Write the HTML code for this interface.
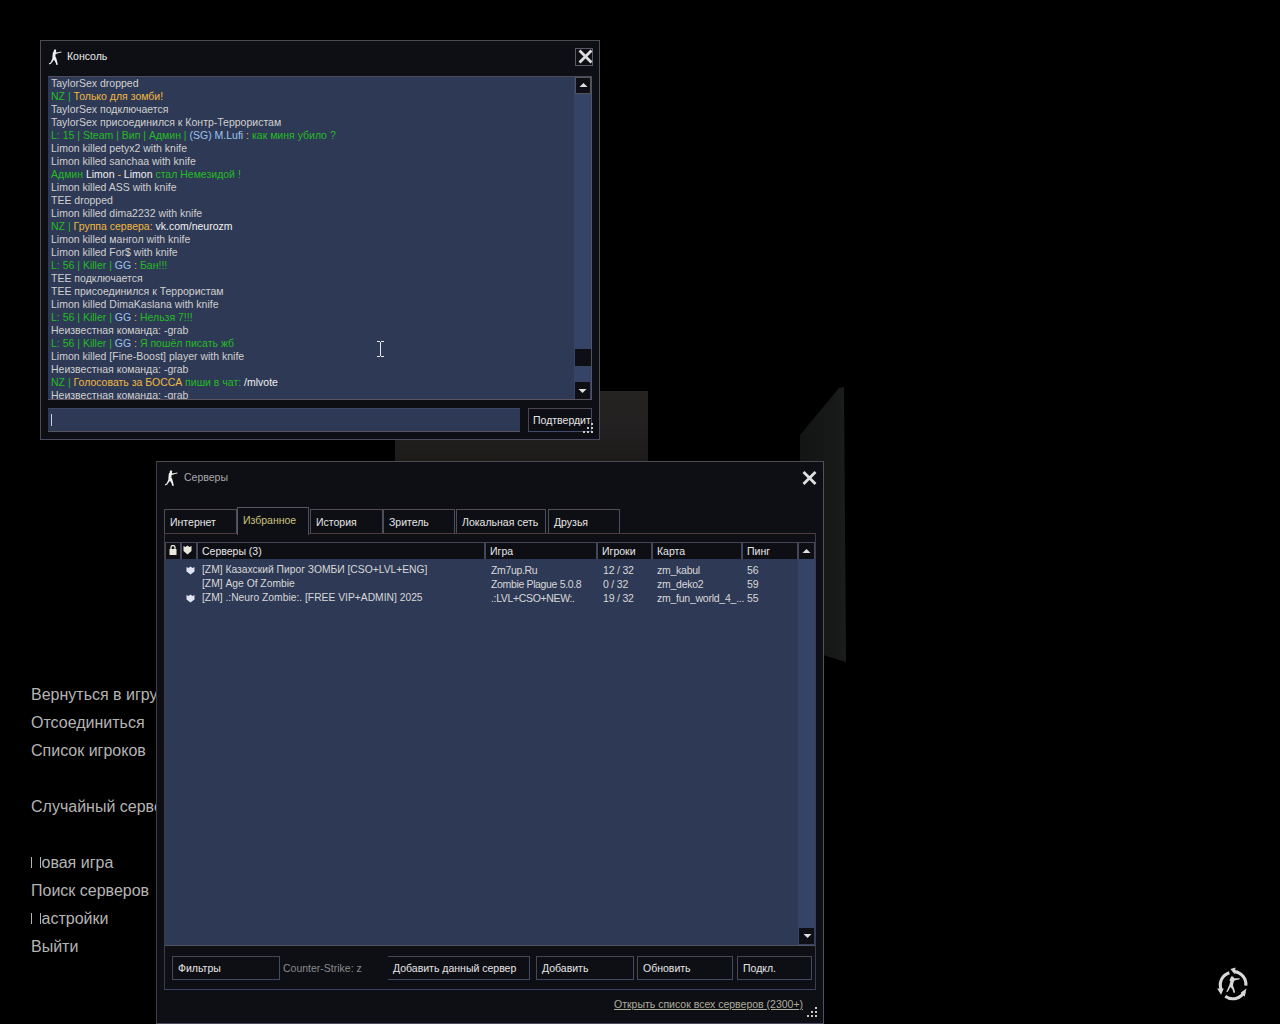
<!DOCTYPE html>
<html><head><meta charset="utf-8">
<style>
html,body{margin:0;padding:0;}
body{width:1280px;height:1024px;background:#000;position:relative;overflow:hidden;font-family:"Liberation Sans",sans-serif;}
.a{position:absolute;box-sizing:border-box;}
.t{position:absolute;white-space:pre;font-size:10.5px;line-height:13px;}
.menu{position:absolute;left:31px;font-size:16px;line-height:20px;color:#b4b4b4;white-space:pre;}
.win{position:absolute;box-sizing:border-box;background:#0e0f15;border:1px solid #4d4b4f;border-right-color:#4a4d62;border-bottom-color:#4a4d62;}
.panel{position:absolute;box-sizing:border-box;background:#2e3955;}
.btn{position:absolute;box-sizing:border-box;background:#0e0f15;border:1px solid #4d4650;border-right-color:#414a66;border-bottom-color:#414a66;color:#e6e6e6;font-size:10.5px;line-height:22px;padding-left:5px;white-space:pre;}
.g{color:#24bb24}.o{color:#f0b840}.b{color:#9ec3f0}.w{color:#f2f2f2}
#con .t{color:#d0d0d0}
.hc{position:absolute;top:543px;height:16px;background:#0e0f15;color:#e6e6e6;font-size:10.5px;line-height:16px;padding-left:4px;box-sizing:border-box;white-space:pre;}
.row{position:absolute;font-size:10.5px;line-height:14px;color:#d8d8d8;white-space:pre;}
.tab{position:absolute;box-sizing:border-box;top:509px;height:25px;background:#0e0f15;border:1px solid #554c52;border-right-color:#4a4e66;border-bottom:none;color:#e6e6e6;font-size:10.5px;line-height:24px;padding-left:5px;white-space:pre;}
.dots i{position:absolute;width:2px;height:2px;background:#c8c8c8;}
</style></head>
<body>
<!-- background scene -->
<div class="a" style="left:395px;top:391px;width:253px;height:72px;background:linear-gradient(180deg,#262422,#222020 50%,#1d1b1a);"></div>
<svg class="a" style="left:790px;top:380px" width="70" height="290">
  <defs><linearGradient id="pg" x1="0" y1="0" x2="1" y2="0"><stop offset="0" stop-color="#131414"/><stop offset="0.7" stop-color="#171818"/><stop offset="1" stop-color="#1b1c1c"/></linearGradient></defs>
  <polygon points="10,55 49,8 54,7 56,282 33,275 10,270" fill="url(#pg)"/>
</svg>

<!-- menu -->
<div class="menu" style="top:685px">Вернуться в игру</div>
<div class="menu" style="top:713px">Отсоединиться</div>
<div class="menu" style="top:741px">Список игроков</div>
<div class="menu" style="top:797px">Случайный сервер</div>
<div class="menu" style="top:853px"><span style="display:inline-block;width:9.5px;height:11.5px;border-left:1.4px solid #b4b4b4;border-right:1.4px solid #b4b4b4;box-sizing:border-box;margin-right:1px;"></span>овая игра</div>
<div class="menu" style="top:881px">Поиск серверов</div>
<div class="menu" style="top:909px"><span style="display:inline-block;width:9.5px;height:11.5px;border-left:1.4px solid #b4b4b4;border-right:1.4px solid #b4b4b4;box-sizing:border-box;margin-right:1px;"></span>астройки</div>
<div class="menu" style="top:937px">Выйти</div>

<!-- console window -->
<div id="con" class="win" style="left:40px;top:40px;width:560px;height:400px;">
</div>
<div id="conc">
  <svg class="a" style="left:48px;top:49px" width="14" height="17" viewBox="0 0 14 17"><ellipse cx="7" cy="1.7" rx="1.2" ry="1.5" fill="#f0f0f0"/><path d="M5.6 2.6 L7.5 2.4 L8.6 3.4 L13.4 2.5 L13.4 3.4 L10.6 4 L9.8 4.6 L7.6 4.9 L7.4 7.6 L8.3 9.2 L9.4 13.5 L9.8 15.8 L8.4 16 L7.6 13.6 L6 10.8 L3.2 14.6 L1.4 15.4 L0.9 14.3 L2.6 13.4 L4.3 9.8 L4.6 5.4 L4.9 3.5 Z" fill="#f0f0f0"/></svg>
  <div class="t" style="left:67px;top:50px;color:#ececec;font-size:10.5px;">Консоль</div>
  <div class="a" style="left:575px;top:48px;width:18px;height:18px;border:1px solid #5c5866;background:#0e0f15;">
    <svg class="a" style="left:0px;top:0px" width="17" height="17"><path d="M4.5 2.6 L14.5 12.6 M14.5 2.6 L4.5 12.6" stroke="#dcdcdc" stroke-width="2.8" stroke-linecap="square"/></svg>
  </div>
  <!-- text panel -->
  <div class="panel" style="left:48px;top:76px;width:544px;height:324px;border-top:1px solid #4c4b5a;border-bottom:1px solid #5a5560;overflow:hidden;">
  </div>
  <div class="a" style="left:574px;top:77px;width:18px;height:322px;background:#354466;border-right:1px solid #55525e;"></div>
  <div class="a" style="left:575px;top:77px;width:16px;height:17px;background:#0e0f15;border:1px solid #55525e;">
    <svg class="a" style="left:3px;top:4px" width="9" height="6"><path d="M0.5 5 L4.5 1 L8.5 5 Z" fill="#e0e0e0"/></svg>
  </div>
  <div class="a" style="left:575px;top:349px;width:16px;height:17px;background:#0e0f15;"></div>
  <div class="a" style="left:575px;top:382px;width:15px;height:17px;background:#0e0f15;">
    <svg class="a" style="left:3px;top:6px" width="9" height="6"><path d="M0.5 1 L4.5 5 L8.5 1 Z" fill="#e0e0e0"/></svg>
  </div>
  <div style="position:absolute;left:51px;top:77px;width:520px;height:322px;overflow:hidden;">
   <div class="t" style="left:0;top:0;color:#d0d0d0;">TaylorSex dropped
<span class="g">NZ | </span><span class="o">Только для зомби!</span>
TaylorSex подключается
TaylorSex присоединился к Контр-Террористам
<span class="g">L: 15 | Steam | Вип | Админ | </span><span class="b">(SG) M.Lufi</span><span class="o"> : </span><span class="g">как миня убило ?</span>
Limon killed petyx2 with knife
Limon killed sanchaa with knife
<span class="g">Админ </span><span class="w">Limon </span><span class="o">-</span><span class="w"> Limon </span><span class="g">стал Немезидой !</span>
Limon killed ASS with knife
TEE dropped
Limon killed dima2232 with knife
<span class="g">NZ | </span><span class="o">Группа сервера: </span><span class="w">vk.com/neurozm</span>
Limon killed мангол with knife
Limon killed For$ with knife
<span class="g">L: 56 | Killer | </span><span class="b">GG</span><span class="o"> : </span><span class="g">Бан!!!</span>
TEE подключается
TEE присоединился к Террористам
Limon killed DimaKaslana with knife
<span class="g">L: 56 | Killer | </span><span class="b">GG</span><span class="o"> : </span><span class="g">Нельзя 7!!!</span>
Неизвестная команда: -grab
<span class="g">L: 56 | Killer | </span><span class="b">GG</span><span class="o"> : </span><span class="g">Я пошёл писать жб</span>
Limon killed [Fine-Boost] player with knife
Неизвестная команда: -grab
<span class="g">NZ | </span><span class="o">Голосовать за БОССА </span><span class="g">пиши в чат: </span><span class="w">/mlvote</span>
Неизвестная команда: -grab</div>
  </div>
  <!-- I-beam cursor -->
  <svg class="a" style="left:376px;top:341px" width="9" height="16"><path d="M1 0.5 H4 M5 0.5 H8 M4.5 1 V15 M1 15.5 H4 M5 15.5 H8" stroke="#e8e8e8" stroke-width="1"/></svg>
  <!-- input -->
  <div class="panel" style="left:48px;top:408px;width:472px;height:24px;border-top:1px solid #3a4666;border-bottom:1px solid #58555f;"></div>
  <div class="a" style="left:51px;top:414px;width:1px;height:12px;background:#c8d0e0;"></div>
  <div class="btn" style="left:528px;top:408px;width:64px;height:24px;overflow:hidden;padding-left:4px;">Подтвердит</div>
  <div class="dots"><i style="left:591px;top:423px"></i><i style="left:587px;top:427px"></i><i style="left:591px;top:427px"></i><i style="left:583px;top:431px"></i><i style="left:587px;top:431px"></i><i style="left:591px;top:431px"></i></div>
</div>

<!-- servers window -->
<div class="win" style="left:156px;top:461px;width:668px;height:563px;border-color:#4d4b4f #4e5266 #4a4d62 #3e3c42;"></div>
<div id="srv">
  <svg class="a" style="left:164px;top:470px" width="14" height="17" viewBox="0 0 14 17"><ellipse cx="7" cy="1.7" rx="1.2" ry="1.5" fill="#f0f0f0"/><path d="M5.6 2.6 L7.5 2.4 L8.6 3.4 L13.4 2.5 L13.4 3.4 L10.6 4 L9.8 4.6 L7.6 4.9 L7.4 7.6 L8.3 9.2 L9.4 13.5 L9.8 15.8 L8.4 16 L7.6 13.6 L6 10.8 L3.2 14.6 L1.4 15.4 L0.9 14.3 L2.6 13.4 L4.3 9.8 L4.6 5.4 L4.9 3.5 Z" fill="#f0f0f0"/></svg>
  <div class="t" style="left:184px;top:471px;color:#a8a8a8;font-size:10.5px;">Серверы</div>
  <svg class="a" style="left:802px;top:471px" width="15" height="14"><path d="M2.5 2 L12.5 12 M12.5 2 L2.5 12" stroke="#e0e0e0" stroke-width="2.8" stroke-linecap="square"/></svg>

  <!-- tabs -->
  <div class="tab" style="left:164px;width:73px;">Интернет</div>
  <div class="tab" style="left:237px;top:507px;width:72px;height:28px;color:#cac27c;line-height:24px;border-color:#5a5660 #4a5068 #4a5068 #5a5660;">Избранное</div>
  <div class="tab" style="left:310px;width:73px;">История</div>
  <div class="tab" style="left:383px;width:72px;">Зритель</div>
  <div class="tab" style="left:456px;width:90px;">Локальная сеть</div>
  <div class="tab" style="left:548px;width:72px;">Друзья</div>

  <!-- main tab panel -->
  <div class="a" style="left:164px;top:533px;width:652px;height:457px;border:1px solid #3c3c4c;border-top-color:#4e3c3a;border-bottom-color:#3a4266;"></div>
  <div class="a" style="left:237px;top:533px;width:72px;height:2px;background:#0e0f15;border-left:1px solid #5a5660;border-right:1px solid #4a5068;"></div>

  <!-- list panel -->
  <div class="panel" style="left:165px;top:542px;width:650px;height:404px;border-top:1px solid #4a4a5c;border-bottom:1px solid #55525a;"></div>
  <div class="a" style="left:165px;top:542px;width:650px;height:17px;background:#45465a;"></div>
  <div class="a" style="left:165px;top:542px;width:1px;height:17px;background:#5a4545;"></div>
  <div class="hc" style="left:166px;width:14px;"></div>
  <div class="hc" style="left:182px;width:14px;"></div>
  <div class="hc" style="left:198px;width:286px;">Серверы (3)</div>
  <div class="hc" style="left:486px;width:110px;">Игра</div>
  <div class="hc" style="left:598px;width:53px;">Игроки</div>
  <div class="hc" style="left:653px;width:88px;">Карта</div>
  <div class="hc" style="left:743px;width:54px;">Пинг</div>
  <div class="hc" style="left:799px;width:15px;"><svg class="a" style="left:3px;top:5px" width="9" height="6"><path d="M0.5 5 L4.5 1 L8.5 5 Z" fill="#e0e0e0"/></svg></div>
  <!-- lock icon -->
  <svg class="a" style="left:169px;top:545px" width="8" height="10"><path d="M2 4 V2.5 A2 2 0 0 1 6 2.5 V4" stroke="#e8e8dc" stroke-width="1.3" fill="none"/><rect x="0.5" y="4" width="7" height="6" fill="#e8e8dc"/></svg>
  <svg class="a" style="left:183px;top:545px" width="9" height="10"><path d="M0.5 1 L2.5 2 L4.5 0.5 L6.5 2 L8.5 1 V6 L4.5 9.5 L0.5 6 Z" fill="#e8e8dc"/></svg>
  <!-- scrollbar -->
  <div class="a" style="left:798px;top:559px;width:17px;height:386px;background:#354466;"></div>
  <div class="a" style="left:799px;top:928px;width:15px;height:16px;background:#0e0f15;"><svg class="a" style="left:4px;top:5px" width="9" height="6"><path d="M0.5 1 L4.5 5 L8.5 1 Z" fill="#e0e0e0"/></svg></div>

  <!-- rows -->
  <svg class="a" style="left:186px;top:566px" width="9" height="9"><path d="M0.5 1 L2.5 2 L4.5 0.5 L6.5 2 L8.5 1 V5.5 L4.5 8.5 L0.5 5.5 Z" fill="#e0e4ee"/></svg>
  <svg class="a" style="left:186px;top:594px" width="9" height="9"><path d="M0.5 1 L2.5 2 L4.5 0.5 L6.5 2 L8.5 1 V5.5 L4.5 8.5 L0.5 5.5 Z" fill="#e0e4ee"/></svg>
  <div class="row" style="left:202px;top:563px;font-size:10.3px;">[ZM] Казахский Пирог ЗОМБИ [CSO+LVL+ENG]
[ZM] Age Of Zombie
[ZM] .:Neuro Zombie:. [FREE VIP+ADMIN] 2025</div>
  <div class="row" style="left:491px;top:563px;letter-spacing:-0.35px;">Zm7up.Ru
Zombie Plague 5.0.8
.:LVL+CSO+NEW:.</div>
  <div class="row" style="left:603px;top:563px;letter-spacing:-0.2px;">12 / 32
0 / 32
19 / 32</div>
  <div class="row" style="left:657px;top:563px;letter-spacing:-0.25px;">zm_kabul
zm_deko2
zm_fun_world_4_...</div>
  <div class="row" style="left:747px;top:563px;">56
59
55</div>

  <!-- bottom buttons -->
  <div class="btn" style="left:172px;top:956px;width:108px;height:24px;">Фильтры</div>
  <div class="t" style="left:283px;top:962px;color:#8a8a8a;">Counter-Strike: z</div>
  <div class="btn" style="left:388px;top:956px;width:142px;height:24px;border-left:none;">Добавить данный сервер</div>
  <div class="btn" style="left:536px;top:956px;width:98px;height:24px;">Добавить</div>
  <div class="btn" style="left:637px;top:956px;width:96px;height:24px;">Обновить</div>
  <div class="btn" style="left:737px;top:956px;width:75px;height:24px;">Подкл.</div>
  <div class="t" style="left:614px;top:998px;color:#aeac9c;text-decoration:underline;">Открыть список всех серверов (2300+)</div>
  <div class="dots"><i style="left:815px;top:1007px"></i><i style="left:811px;top:1011px"></i><i style="left:815px;top:1011px"></i><i style="left:807px;top:1015px"></i><i style="left:811px;top:1015px"></i><i style="left:815px;top:1015px"></i></div>
</div>

<!-- bottom-right logo -->
<svg class="a" style="left:1216px;top:967px" width="35" height="35" viewBox="0 0 34 34">
  <path d="M5 22 A12.5 12.5 0 0 1 13 5.5" stroke="#d8d8d8" stroke-width="3" fill="none"/>
  <path d="M18 4.5 A12.5 12.5 0 0 1 29 18" stroke="#d8d8d8" stroke-width="3" fill="none"/>
  <path d="M27.5 24 A12.5 12.5 0 0 1 9 28.5" stroke="#d8d8d8" stroke-width="3" fill="none"/>
  <path d="M14 2 L19 0.5 L18 7 Z M1 21 L7.5 21 L5 27 Z M29.5 21 L28 29 L24 25 Z" fill="#d8d8d8"/>
  <path d="M15 9 L17 9.5 L17.5 11 L23 11 L23 12 L18 13 L17 15 L16.5 18 L18 22 L18.5 25 L17 25 L16 21.5 L14 19.5 L11.5 24 L10 24.5 L10.5 23 L13 17.5 L14 13.5 L13 13 L14.5 10 Z" fill="#d8d8d8"/>
</svg>
</body></html>
